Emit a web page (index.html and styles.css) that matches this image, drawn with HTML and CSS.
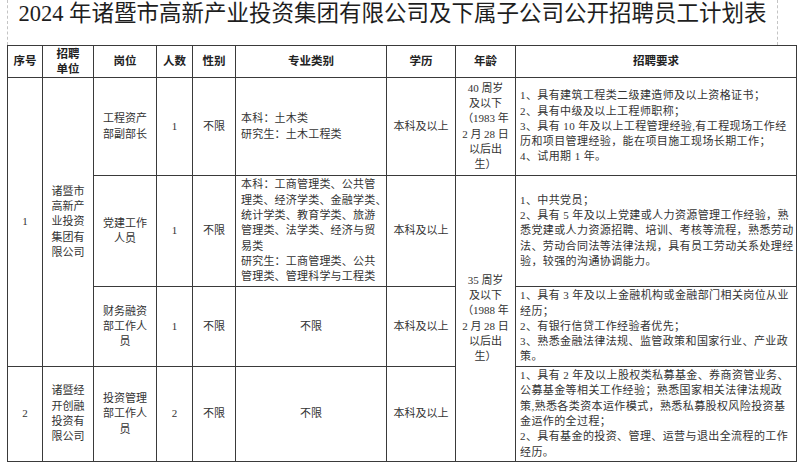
FILE: index.html
```html
<!DOCTYPE html>
<html lang="zh-CN">
<head>
<meta charset="utf-8">
<title>2024 年诸暨市高新产业投资集团有限公司及下属子公司公开招聘员工计划表</title>
<link rel="stylesheet" href="styles.css">
</head>
<body>
<div class="page">
  <div class="title-box">
    <h1 class="title">2024 年诸暨市高新产业投资集团有限公司及下属子公司公开招聘员工计划表</h1>
  </div>
  <table class="plan">
    <colgroup>
      <col class="c-no">
      <col class="c-unit">
      <col class="c-post">
      <col class="c-num">
      <col class="c-sex">
      <col class="c-major">
      <col class="c-edu">
      <col class="c-age">
      <col class="c-req">
    </colgroup>
    <thead>
      <tr class="r-head">
        <th>序号</th>
        <th>招聘<br>单位</th>
        <th>岗位</th>
        <th>人数</th>
        <th>性别</th>
        <th>专业类别</th>
        <th>学历</th>
        <th>年龄</th>
        <th>招聘要求</th>
      </tr>
    </thead>
    <tbody>
      <tr class="r1">
        <td rowspan="3">1</td>
        <td rowspan="3">诸暨市<br>高新产<br>业投资<br>集团有<br>限公司</td>
        <td>工程资产<br>部副部长</td>
        <td>1</td>
        <td>不限</td>
        <td class="left major">本科：土木类<br>研究生：土木工程类</td>
        <td>本科及以上</td>
        <td>40 周岁<br>及以下<br>（1983 年<br>2 月 28 日<br>以后出<br>生）</td>
        <td class="left req">1、具有建筑工程类二级建造师及以上资格证书；<br>2、具有中级及以上工程师职称；<br>3、具有 10 年及以上工程管理经验,有工程现场工作经<br>历和项目管理经验，能在项目施工现场长期工作；<br>4、试用期 1 年。</td>
      </tr>
      <tr class="r2">
        <td>党建工作<br>人员</td>
        <td>1</td>
        <td>不限</td>
        <td class="left major">本科：工商管理类、公共管<br>理类、经济学类、金融学类、<br>统计学类、教育学类、旅游<br>管理类、法学类、经济与贸<br>易类<br>研究生：工商管理类、公共<br>管理类、管理科学与工程类</td>
        <td>本科及以上</td>
        <td rowspan="3">35 周岁<br>及以下<br>（1988 年<br>2 月 28 日<br>以后出<br>生）</td>
        <td class="left req">1、中共党员；<br>2、具有 5 年及以上党建或人力资源管理工作经验，熟<br>悉党建或人力资源招聘、培训、考核等流程，熟悉劳动<br>法、劳动合同法等法律法规，具有员工劳动关系处理经<br>验，较强的沟通协调能力。</td>
      </tr>
      <tr class="r3">
        <td>财务融资<br>部工作人<br>员</td>
        <td>1</td>
        <td>不限</td>
        <td>不限</td>
        <td>本科及以上</td>
        <td class="left req">1、具有 3 年及以上金融机构或金融部门相关岗位从业<br>经历；<br>2、有银行信贷工作经验者优先；<br>3、熟悉金融法律法规、监管政策和国家行业、产业政<br>策。</td>
      </tr>
      <tr class="r4">
        <td>2</td>
        <td>诸暨经<br>开创融<br>投资有<br>限公司</td>
        <td>投资管理<br>部工作人<br>员</td>
        <td>2</td>
        <td>不限</td>
        <td>不限</td>
        <td>本科及以上</td>
        <td class="left req">1、具有 2 年及以上股权类私募基金、券商资管业务、<br>公募基金等相关工作经验；熟悉国家相关法律法规政<br>策,熟悉各类资本运作模式，熟悉私募股权风险投资基<br>金运作的全过程；<br>2、具有基金的投资、管理、运营与退出全流程的工作<br>经历。</td>
      </tr>
    </tbody>
  </table>
</div>
</body>
</html>
```

FILE: styles.css
```css
html, body {
  margin: 0;
  padding: 0;
  background: #ffffff;
}

body {
  font-family: "Liberation Serif", "Noto Sans CJK SC", serif;
  color: #333333;
}

.page {
  padding-left: 7px;
}

.title-box {
  box-sizing: border-box;
  width: 771px;
  height: 45px;
  border-left: 1px dashed #c4c4c4;
  border-right: 1px dashed #c4c4c4;
}

.title {
  margin: 0;
  font-size: 22.5px;
  line-height: 28px;
  font-weight: normal;
  text-align: center;
  color: #1e1e1e;
  white-space: nowrap;
}

.plan {
  border-collapse: collapse;
  table-layout: fixed;
  width: 789px;
  font-size: 11px;
  line-height: 15.3px;
}

.c-no { width: 35px; }
.c-unit { width: 51px; }
.c-post { width: 63px; }
.c-num { width: 36px; }
.c-sex { width: 43px; }
.c-major { width: 151px; }
.c-edu { width: 69px; }
.c-age { width: 60px; }
.c-req { width: 281px; }

.plan th,
.plan td {
  border: 1px solid #3a3a3a;
  padding: 0;
  text-align: center;
  vertical-align: middle;
  white-space: nowrap;
  overflow: visible;
}

.plan th {
  font-weight: bold;
  font-size: 11.5px;
  line-height: 15px;
  color: #222222;
}

.plan td.left {
  text-align: left;
}

.plan td.major {
  padding-left: 5px;
  letter-spacing: 0.2px;
}

.plan td.req {
  padding-left: 4px;
  letter-spacing: 0.4px;
}

.r-head { height: 32px; }
.r1 { height: 98px; }
.r2 { height: 111px; }
.r3 { height: 80px; }
.r4 { height: 95px; }
```
